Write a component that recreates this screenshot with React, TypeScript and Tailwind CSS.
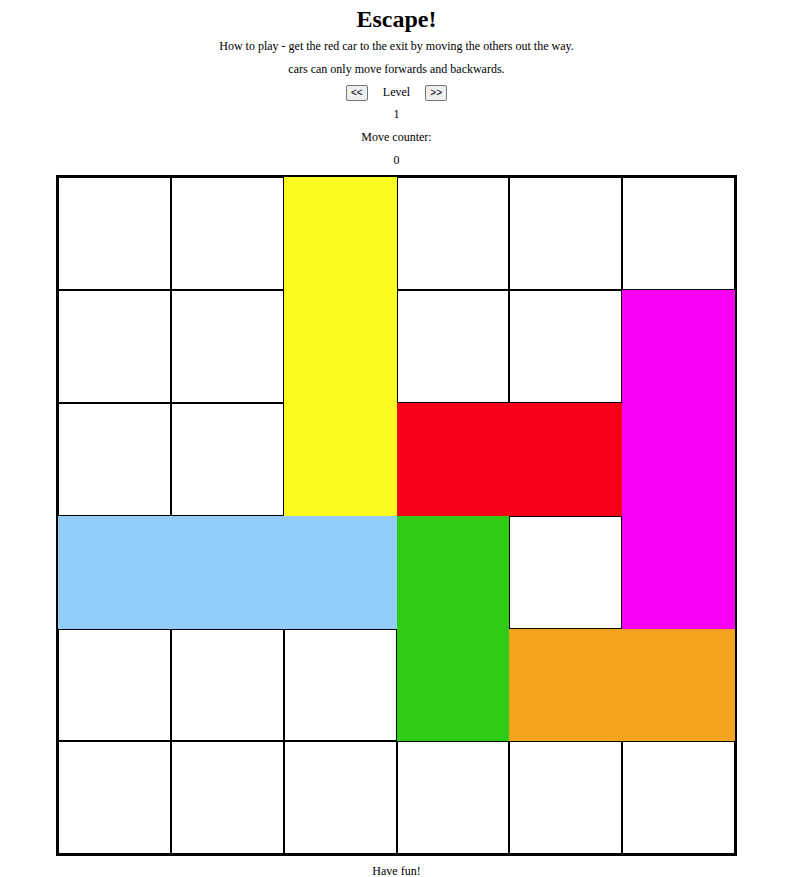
import React from "react";

type Car = { color: string; pos: string };

const cars: Car[] = [
  { color: "bg-[#fbfb22]", pos: "col-start-3 row-start-1 row-span-3" },
  { color: "bg-[#f700f4]", pos: "col-start-6 row-start-2 row-span-3" },
  { color: "bg-[#f50018]", pos: "col-start-4 col-span-2 row-start-3" },
  { color: "bg-[#92cdf8]", pos: "col-start-1 col-span-3 row-start-4" },
  { color: "bg-[#30cb15]", pos: "col-start-4 row-start-4 row-span-2" },
  { color: "bg-[#f6a41f]", pos: "col-start-5 col-span-2 row-start-5" },
];

function Board() {
  // 36 squares, 15 of them taken by cars
  const emptyCells = 36 - 15;
  return (
    <div className="mx-auto w-[681px] h-[681px] border-2 border-black grid grid-cols-6 grid-rows-6">
      {cars.map((car, i) => (
        <div key={"car" + i} className={car.color + " " + car.pos} />
      ))}
      {Array.from({ length: emptyCells }).map((_, i) => (
        <div key={i} className="border border-black bg-white" />
      ))}
    </div>
  );
}

function NavButton({ label }: { label: string }) {
  return (
    <button className="h-[16px] w-[22px] text-[10px] leading-none bg-[#efefef] border border-[#767676] rounded-[2px] font-['Liberation_Sans',sans-serif]">
      {label}
    </button>
  );
}

export default function App() {
  return (
    <div className="w-[793px] text-center text-black text-[12px] bg-white font-['Liberation_Serif','Times_New_Roman',serif]">
      <h1 className="h-[35px] pt-[3px] text-[24px] font-bold leading-[32px]">Escape!</h1>
      <p className="leading-[22.7px]">How to play - get the red car to the exit by moving the others out the way.</p>
      <p className="leading-[22.7px]">cars can only move forwards and backwards.</p>
      <div className="h-[22.7px] flex items-center justify-center pt-[2px]">
        <NavButton label="<<" />
        <span className="mx-[15px] leading-[22.7px]">Level</span>
        <NavButton label=">>" />
      </div>
      <p className="leading-[22.7px]">1</p>
      <p className="leading-[22.7px]">Move counter:</p>
      <p className="leading-[22.7px]">0</p>
      <div className="mt-[4px]">
        <Board />
      </div>
      <p className="mt-[4px] leading-[22.7px]">Have fun!</p>
    </div>
  );
}
